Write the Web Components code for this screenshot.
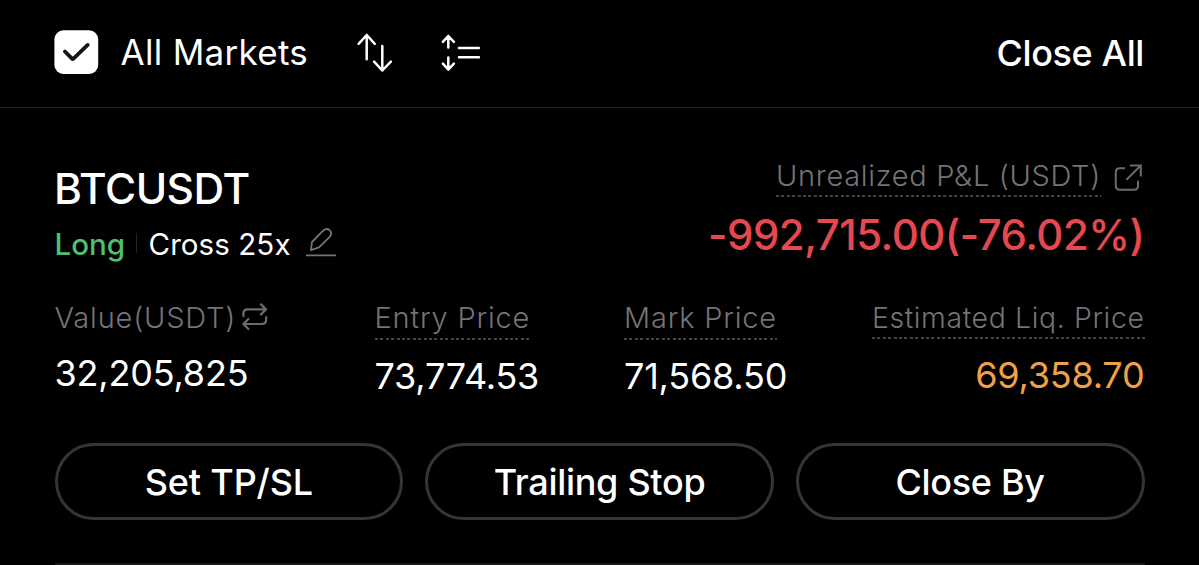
<!DOCTYPE html>
<html lang="en">
<head>
  <meta charset="UTF-8">
  <title>Positions</title>
  <style>
    body {
      margin: 0;
      height: 565px;
      overflow: hidden;
      background: #000;
      color: #fff;
      font-family: Inter, 'Liberation Sans', sans-serif;
    }
  </style>
</head>
<body>
  <positions-toolbar>All Markets<span slot="action">Close All</span></positions-toolbar>
  <position-card symbol="BTCUSDT" side="Long" margin="Cross 25x">
    <pnl-summary slot="pnl" label="Unrealized P&amp;L (USDT)">-992,715.00(-76.02%)</pnl-summary>
    <position-metric slot="metrics" class="value" label="Value(USDT)" swap>32,205,825</position-metric>
    <position-metric slot="metrics" label="Entry Price">73,774.53</position-metric>
    <position-metric slot="metrics" label="Mark Price">71,568.50</position-metric>
    <position-metric slot="metrics" class="liq" label="Estimated Liq. Price">69,358.70</position-metric>
    <pill-button slot="actions" style="--spacing: -0.17px">Set TP/SL</pill-button>
    <pill-button slot="actions">Trailing Stop</pill-button>
    <pill-button slot="actions">Close By</pill-button>
  </position-card>

  <script>
    class PositionsToolbar extends HTMLElement {
      constructor() {
        super();
        this.attachShadow({ mode: 'open' });
        this.shadowRoot.innerHTML = `
          <style>
            :host {
              display: flex;
              align-items: flex-start;
              box-sizing: border-box;
              height: 108px;
              padding: 0 55px 0 54px;
              border-bottom: 1px solid #242426;
            }
            svg {
              display: block;
              flex: none;
              fill: none;
              stroke: #fff;
              stroke-width: 2.5;
              stroke-linecap: round;
              stroke-linejoin: round;
            }
            .check {
              margin-top: 30px;
              stroke: #15151a;
              stroke-width: 3.8;
            }
            .title {
              width: 230px;
              margin: 30px 0 0 21.5px;
              font-size: 35px;
              font-weight: 400;
              line-height: 45px;
              letter-spacing: 0.3px;
            }
            .sort { margin: 30px 0 0 -0.5px; }
            .density { margin: 30px 0 0 40px; }
            .action {
              margin: 31px 0 0 auto;
              font-size: 36px;
              font-weight: 500;
              line-height: 44px;
              letter-spacing: -0.4px;
            }
          </style>
          <svg class="check" width="45" height="45" viewBox="0 0 45 45">
            <rect x="0.4" y="0.3" width="43.8" height="43.6" rx="9" fill="#fff" stroke="none"/>
            <path d="M10.9 21.5l7.1 7.1q.7.7 1.5 0l14.2-13.7"/>
          </svg>
          <div class="title"><slot></slot></div>
          <svg class="sort" width="45" height="45" viewBox="350 30 45 45">
            <path d="M366.7 59.2V35M358.6 43.8l8.1-8.8 8.1 8.8M382.3 46v24.5M374.1 61.7l8.2 8.8 8.6-8.8"/>
          </svg>
          <svg class="density" width="45" height="45" viewBox="435 30 45 45">
            <path d="M448.3 47.4V36M442.9 41.8l5.4-5.8 5.6 5.8M448.3 57.6v12M442.9 63.6l5.4 6 5.6-6M459 48h20M459 57.3h20"/>
          </svg>
          <div class="action"><slot name="action"></slot></div>
        `;
      }
    }

    class PositionCard extends HTMLElement {
      constructor() {
        super();
        this.attachShadow({ mode: 'open' });
        this.shadowRoot.innerHTML = `
          <style>
            :host {
              display: flex;
              flex-direction: column;
              box-sizing: border-box;
              height: 457px;
              margin: 0 54.5px;
              border-bottom: 2px solid #19191a;
            }
            .top {
              display: flex;
              justify-content: space-between;
              height: 193px;
            }
            .symbol {
              margin-top: 57px;
              font-size: 42.5px;
              font-weight: 500;
              line-height: 48px;
              letter-spacing: -0.5px;
              text-indent: -0.5px;
            }
            .mode {
              display: flex;
              margin-top: 13px;
              font-size: 29.5px;
              line-height: 36px;
            }
            .side {
              color: #4fbf70;
              font-weight: 450;
            }
            .bar {
              width: 1px;
              height: 20px;
              margin: 7px 11.5px 0 11px;
              background: #252527;
            }
            .margin {
              font-weight: 400;
              letter-spacing: 0.08px;
            }
            svg {
              margin-left: 15px;
              fill: none;
              stroke: #747478;
              stroke-width: 1.8;
              stroke-linejoin: round;
            }
            .metrics {
              display: grid;
              grid-template-columns: 320px 249.5px 1fr auto;
              height: 142px;
            }
            .actions {
              display: grid;
              grid-template-columns: repeat(3, 1fr);
              gap: 21.8px;
            }
          </style>
          <div class="top">
            <div>
              <div class="symbol"></div>
              <div class="mode">
                <span class="side"></span>
                <span class="bar"></span>
                <span class="margin"></span>
                <svg width="31" height="36" viewBox="306 226 31 36">
                  <path d="M311 250.2l1-8.2 10.6-10.8c2-2.2 4.8-2.8 6.9-1.1 2.2 1.8 1.8 4.7.2 6.8L319 247.3zM306 255.4h30"/>
                </svg>
              </div>
            </div>
            <slot name="pnl"></slot>
          </div>
          <div class="metrics"><slot name="metrics"></slot></div>
          <div class="actions"><slot name="actions"></slot></div>
        `;
        for (const name of ['symbol', 'side', 'margin']) {
          this.shadowRoot.querySelector('.' + name).textContent = this.getAttribute(name);
        }
      }
    }

    // Grey caption with a dashed rule under it
    class HintLabel extends HTMLElement {
      constructor() {
        super();
        this.attachShadow({ mode: 'open' });
        this.shadowRoot.innerHTML = `
          <style>
            :host {
              display: block;
              width: max-content;
              padding-bottom: 5px;
              color: #737378;
              font-size: 29px;
              font-weight: 300;
              line-height: 34px;
              letter-spacing: 0.8px;
              white-space: nowrap;
              background: repeating-linear-gradient(90deg, #444447 0 3px, transparent 3px 5.4px) left bottom / 100% 2px no-repeat;
            }
            :host([plain]) {
              background: none;
            }
          </style>
          <slot></slot>
        `;
      }
    }

    class PnlSummary extends HTMLElement {
      constructor() {
        super();
        this.attachShadow({ mode: 'open' });
        this.shadowRoot.innerHTML = `
          <style>
            :host {
              display: flex;
              flex-direction: column;
              align-items: flex-end;
              padding-top: 51px;
            }
            .head { display: flex; }
            hint-label {
              padding-bottom: 4px;
              letter-spacing: 0.68px;
            }
            svg {
              margin: 4px 2px 0 12.5px;
              fill: none;
              stroke: #6b6b70;
              stroke-width: 2;
            }
            .amount {
              margin-top: 14px;
              color: #e5484f;
              font-size: 42px;
              font-weight: 500;
              line-height: 48px;
              letter-spacing: -0.5px;
            }
          </style>
          <div class="head">
            <hint-label></hint-label>
            <svg width="29" height="29" viewBox="1114 162 29 29">
              <path d="M1125 167.2h-5.2q-4 0-4 4v13.6q0 4 4 4h14.2q4 0 4-4v-5M1126.4 178.8l14.2-14.2M1129.8 164.6h11v10.8"/>
            </svg>
          </div>
          <div class="amount"><slot></slot></div>
        `;
        this.shadowRoot.querySelector('hint-label').textContent = this.getAttribute('label');
      }
    }

    class PositionMetric extends HTMLElement {
      constructor() {
        super();
        this.attachShadow({ mode: 'open' });
        const swap = this.hasAttribute('swap');
        this.shadowRoot.innerHTML = `
          <style>
            :host { display: block; }
            .head { display: flex; }
            svg {
              margin: 1px 0 0 5px;
              fill: none;
              stroke: #6b6b70;
              stroke-width: 2.2;
              stroke-linecap: round;
              stroke-linejoin: round;
            }
            .number {
              margin-top: 14px;
              font-size: 36px;
              font-weight: 400;
              line-height: 44px;
              letter-spacing: -0.2px;
            }
            :host(.value) .number { margin-top: 11px; }
            :host(.liq) hint-label {
              font-size: 28.4px;
              padding-bottom: 4px;
              letter-spacing: 0.64px;
            }
            :host(.liq) .number {
              color: #f0a048;
              text-align: right;
            }
          </style>
          <div class="head">
            <hint-label ${swap ? 'plain' : ''}></hint-label>
            ${swap ? `<svg width="28" height="32" viewBox="241 302 28 32">
              <path d="M243.4 316.2v-2.4q0-4.4 4.4-4.4h18M261 304.4l5 5-5 5M266.2 317.2v2.4q0 4.4-4.4 4.4h-18M248.4 319l-5 5 5 5"/>
            </svg>` : ''}
          </div>
          <div class="number"><slot></slot></div>
        `;
        this.shadowRoot.querySelector('hint-label').textContent = this.getAttribute('label');
      }
    }

    class PillButton extends HTMLElement {
      constructor() {
        super();
        this.attachShadow({ mode: 'open' });
        this.shadowRoot.innerHTML = `
          <style>
            :host {
              display: block;
              box-sizing: border-box;
              height: 77px;
              border: 3px solid #353537;
              border-radius: 39px;
              font-size: 36px;
              font-weight: 500;
              line-height: 72px;
              letter-spacing: var(--spacing, -0.3px);
              text-align: center;
            }
          </style>
          <slot></slot>
        `;
      }
    }

    customElements.define('positions-toolbar', PositionsToolbar);
    customElements.define('hint-label', HintLabel);
    customElements.define('pnl-summary', PnlSummary);
    customElements.define('position-metric', PositionMetric);
    customElements.define('pill-button', PillButton);
    customElements.define('position-card', PositionCard);
  </script>
</body>
</html>
